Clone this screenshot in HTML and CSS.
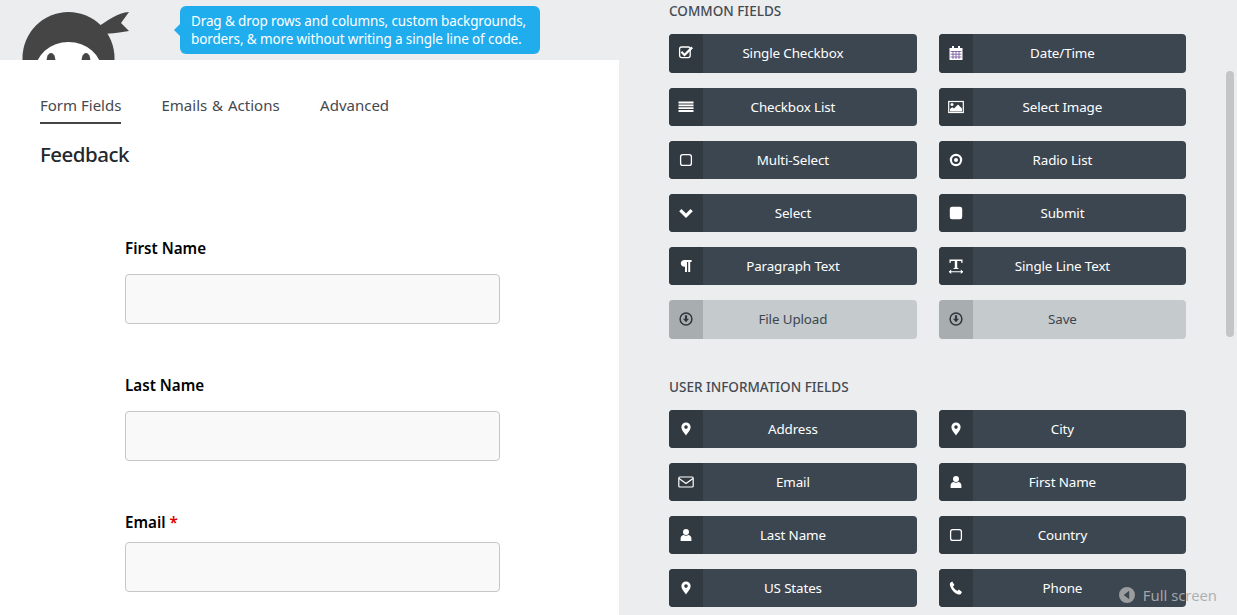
FILE: index.html
```html
<!DOCTYPE html>
<html lang="en">
<head>
<meta charset="utf-8">
<title>Form Builder</title>
<link rel="stylesheet" href="styles.css">
</head>
<body>
<svg class="sprite" aria-hidden="true">
  <symbol id="i-check" viewBox="0 1 16 16"><rect x="1.6" y="3" width="10.6" height="10.6" rx="2" fill="none" stroke="currentColor" stroke-width="1.3"/><path d="M4.2 7l2.3 2.4L13.4 2.6l1.6 1.6-8.5 8.2-3.9-3.9z" fill="currentColor"/></symbol>
  <symbol id="i-calendar" viewBox="0 0 16 16"><path d="M1.5 3h13v12h-13z" fill="currentColor"/><path d="M4 1h2v3H4zM10 1h2v3h-2z" fill="currentColor"/><path d="M2.500 6.500h11M2.500 9.200h11M2.500 12h11M5 6v8M8 6v8M11 6v8" stroke="#5b3a8c" stroke-width=".7"/></symbol>
  <symbol id="i-list" viewBox="0 0 16 16"><path d="M.5 2.500h15v2h-15zM.5 5.500h15v1.800h-15zM.5 8.300h15v1.800h-15zM.5 11.100h15v2h-15z" fill="currentColor"/></symbol>
  <symbol id="i-image" viewBox="0 0 16 16"><rect x=".7" y="2.500" width="14.600" height="11" fill="none" stroke="currentColor" stroke-width="1.200"/><circle cx="4" cy="5.600" r="1.500" fill="currentColor"/><path d="M2 12.500V10l2.300-1.800 1.700 1.200 4-4 4 4v3.100z" fill="currentColor"/></symbol>
  <symbol id="i-square" viewBox="0 0 16 16"><rect x="2.600" y="2.600" width="10.800" height="10.800" rx="2.200" fill="none" stroke="currentColor" stroke-width="1.300"/></symbol>
  <symbol id="i-radio" viewBox="0 0 16 16"><circle cx="8" cy="8" r="5.100" fill="none" stroke="currentColor" stroke-width="2.200"/><circle cx="8" cy="8" r="2" fill="currentColor"/></symbol>
  <symbol id="i-chevron" viewBox="0 0 16 16"><path d="M1.200 6.200l2.300-2.300L8 8.400l4.500-4.500 2.300 2.300L8 13z" fill="currentColor"/></symbol>
  <symbol id="i-solid" viewBox="0 0 16 16"><rect x="1.800" y="1.800" width="12.400" height="12.400" rx="2.200" fill="currentColor"/></symbol>
  <symbol id="i-para" viewBox="0 0 16 16"><path d="M6.600 2h7v1.900h-1.400V14h-2V3.900H9V14H7V8.700h-.4C4.300 8.700 2.800 7.300 2.800 5.300S4.300 2 6.600 2z" fill="currentColor"/></symbol>
  <symbol id="i-text" viewBox="0 0 16 16"><path d="M1.500 1.500h13v3.600h-1l-.5-2H9.200v6.700l1.300.4v.8h-5v-.8l1.300-.4V3.100H3l-.5 2h-1z" fill="currentColor"/><path d="M1 13.300h14v.9H1z" fill="currentColor"/><path d="M3.200 11.600v4.300L.8 13.750zM12.800 11.600v4.300l2.400-2.150z" fill="currentColor"/></symbol>
  <symbol id="i-down" viewBox="0 0 16 16"><circle cx="8" cy="8" r="5.900" fill="none" stroke="currentColor" stroke-width="1.500"/><path d="M6.900 4.300h2.200v3.500h2L8 11.300 4.900 7.800h2z" fill="currentColor"/></symbol>
  <symbol id="i-pin" viewBox="0 0 16 16"><path fill-rule="evenodd" d="M8 1.500a4.600 4.600 0 0 1 4.600 4.600c0 3-3 6.200-4.600 8.400-1.600-2.200-4.600-5.400-4.600-8.400A4.600 4.600 0 0 1 8 1.500zm0 2.800a1.800 1.800 0 1 0 0 3.600 1.800 1.800 0 0 0 0-3.600z" fill="currentColor"/></symbol>
  <symbol id="i-mail" viewBox="0 0 16 16"><rect x=".8" y="3" width="14.400" height="10" rx="1" fill="none" stroke="currentColor" stroke-width="1.200"/><path d="M1 4.500l7 5 7-5" fill="none" stroke="currentColor" stroke-width="1.200"/></symbol>
  <symbol id="i-user" viewBox="0 0 16 16"><circle cx="8" cy="4.900" r="3" fill="currentColor"/><path d="M2.600 14v-2.600c0-2 1.600-3.400 3.200-3.400.6.500 1.300.8 2.200.8s1.600-.3 2.200-.8c1.600 0 3.200 1.400 3.200 3.400V14z" fill="currentColor"/></symbol>
  <symbol id="i-phone" viewBox="0 0 16 16"><path d="M2.300 2.700L4.300 1.500 6.400 5 5 6.400c.8 1.800 2.300 3.400 4.400 4.500l1.400-1.300 3.200 2.300-1.200 2c-.5.700-1.300.8-2.200.6C6.400 13.200 3 9.700 1.900 5c-.2-.9-.1-1.700.4-2.300z" fill="currentColor"/></symbol>
  <symbol id="i-back" viewBox="0 0 16 16"><path fill-rule="evenodd" d="M8 0a8 8 0 1 1 0 16A8 8 0 0 1 8 0zm2.200 3.800L4.700 8l5.500 4.200z" fill="currentColor"/></symbol>
</svg>

<div class="app">
  <main class="editor">
    <header class="brand">
      <svg class="logo" viewBox="0 0 140 60" aria-hidden="true">
        <circle cx="68.500" cy="58" r="46" fill="#444544"/>
        <path d="M96 28 C106 22 118 12 129 12 L121 23 L129 31 C118 33 108 34 100 34 z" fill="#444544"/>
        <ellipse cx="68.500" cy="72" rx="33.500" ry="30" fill="#fff"/>
        <ellipse cx="51" cy="61" rx="4.500" ry="8" fill="#444544"/>
        <ellipse cx="86" cy="61" rx="4.500" ry="8" fill="#444544"/>
      </svg>
      <p class="tip">Drag &amp; drop rows and columns, custom backgrounds, borders, &amp; more without writing a single line of code.</p>
    </header>
    <section class="panel">
      <nav class="tabs">
        <a class="tab active">Form Fields</a>
        <a class="tab">Emails &amp; Actions</a>
        <a class="tab">Advanced</a>
      </nav>
      <h1 class="form-title">Feedback</h1>
      <form class="form">
        <div class="field">
          <label class="label">First Name</label>
          <div class="input"></div>
        </div>
        <div class="field">
          <label class="label">Last Name</label>
          <div class="input"></div>
        </div>
        <div class="field field-req">
          <label class="label">Email <span class="req">*</span></label>
          <div class="input"></div>
        </div>
      </form>
    </section>
  </main>

  <aside class="library">
    <h2 class="group-title">COMMON FIELDS</h2>
    <div class="grid">
      <div class="btn"><span class="ico"><svg><use href="#i-check"/></svg></span><span class="txt">Single Checkbox</span></div>
      <div class="btn"><span class="ico"><svg><use href="#i-calendar"/></svg></span><span class="txt">Date/Time</span></div>
      <div class="btn"><span class="ico"><svg><use href="#i-list"/></svg></span><span class="txt">Checkbox List</span></div>
      <div class="btn"><span class="ico"><svg><use href="#i-image"/></svg></span><span class="txt">Select Image</span></div>
      <div class="btn"><span class="ico"><svg><use href="#i-square"/></svg></span><span class="txt">Multi-Select</span></div>
      <div class="btn"><span class="ico"><svg><use href="#i-radio"/></svg></span><span class="txt">Radio List</span></div>
      <div class="btn"><span class="ico"><svg><use href="#i-chevron"/></svg></span><span class="txt">Select</span></div>
      <div class="btn"><span class="ico"><svg><use href="#i-solid"/></svg></span><span class="txt">Submit</span></div>
      <div class="btn"><span class="ico"><svg><use href="#i-para"/></svg></span><span class="txt">Paragraph Text</span></div>
      <div class="btn"><span class="ico"><svg><use href="#i-text"/></svg></span><span class="txt">Single Line Text</span></div>
      <div class="btn off"><span class="ico"><svg><use href="#i-down"/></svg></span><span class="txt">File Upload</span></div>
      <div class="btn off"><span class="ico"><svg><use href="#i-down"/></svg></span><span class="txt">Save</span></div>
    </div>
    <h2 class="group-title second">USER INFORMATION FIELDS</h2>
    <div class="grid">
      <div class="btn"><span class="ico"><svg><use href="#i-pin"/></svg></span><span class="txt">Address</span></div>
      <div class="btn"><span class="ico"><svg><use href="#i-pin"/></svg></span><span class="txt">City</span></div>
      <div class="btn"><span class="ico"><svg><use href="#i-mail"/></svg></span><span class="txt">Email</span></div>
      <div class="btn"><span class="ico"><svg><use href="#i-user"/></svg></span><span class="txt">First Name</span></div>
      <div class="btn"><span class="ico"><svg><use href="#i-user"/></svg></span><span class="txt">Last Name</span></div>
      <div class="btn"><span class="ico"><svg><use href="#i-square"/></svg></span><span class="txt">Country</span></div>
      <div class="btn"><span class="ico"><svg><use href="#i-pin"/></svg></span><span class="txt">US States</span></div>
      <div class="btn"><span class="ico"><svg><use href="#i-phone"/></svg></span><span class="txt">Phone</span></div>
    </div>
    <div class="scroll-thumb"></div>
    <div class="fullscreen"><svg><use href="#i-back"/></svg><span>Full screen</span></div>
  </aside>
</div>
</body>
</html>
```

FILE: styles.css
```css
* { box-sizing: border-box; }
html, body { margin: 0; height: 100%; overflow: hidden; }
body {
  background: #ecedef;
  font-family: "Noto Sans", "Open Sans", "Liberation Sans", sans-serif;
  color: #3c4650;
}
.sprite { display: none; }

.app { display: flex; height: 615px; }

.editor { width: 619px; flex: none; display: flex; flex-direction: column; }
.brand { height: 60px; flex: none; display: flex; overflow: hidden; }
.logo { width: 140px; height: 60px; flex: none; }
.tip {
  position: relative;
  margin: 6px 0 0 40px;
  width: 360px;
  height: 48px;
  padding: 6px 8px 0 11px;
  background: #1faded;
  color: #fff;
  border-radius: 6px;
  font-size: 13.500px;
  letter-spacing: -.12px;
  line-height: 18px;
}
.tip::before {
  content: "";
  position: absolute;
  left: -6px;
  top: 18px;
  border: 6px solid transparent;
  border-left: 0;
  border-right-color: #1faded;
}

.panel { flex: 1; background: #fff; padding: 30px 0 0 40px; }
.tabs { display: flex; gap: 40.500px; }
.tab {
  display: block;
  height: 34px;
  font-size: 15px;
  word-spacing: 1px;
  line-height: 30px;
  color: #45494e;
  white-space: nowrap;
}
.tab.active { width: 81px; word-spacing: 0; border-bottom: 2px solid #444; }
.form-title {
  margin: 16px 0 0;
  font-size: 20.500px;
  letter-spacing: -.5px;
  line-height: 28px;
  font-weight: 500;
  color: #23282d;
}
.form { margin: 68px 0 0 85px; width: 375px; }
.field { margin-bottom: 49px; }
.label {
  display: block;
  height: 38px;
  padding-top: 1px;
  font-size: 15.200px;
  line-height: 22px;
  font-weight: 600;
  color: #000;
}
.field-req .label { height: 32px; }
.req { color: #d00; }
.input {
  height: 50px;
  background: #f9f9f9;
  border: 1px solid #c6c6c6;
  border-radius: 4px;
}

.library { position: relative; flex: 1; padding-left: 50px; }
.group-title {
  margin: 0;
  padding: 0 0 12.400px;
  font-size: 13.500px;
  line-height: 22px;
  font-weight: 500;
  color: #444b52;
}
.group-title.second { padding: 37.100px 0 11.900px; }
.grid {
  display: grid;
  grid-template-columns: 247.800px 247.200px;
  column-gap: 22px;
  row-gap: 15px;
}
.btn {
  display: flex;
  height: 38.200px;
  background: #3c4650;
  color: #fff;
  border-radius: 4px;
  overflow: hidden;
}
.ico {
  width: 34px;
  flex: none;
  display: flex;
  align-items: center;
  justify-content: center;
  background: #323a41;
}
.ico svg { width: 16px; height: 16px; display: block; }
.txt {
  flex: 1;
  padding-right: 34px;
  text-align: center;
  font-size: 13.400px;
  letter-spacing: -.12px;
  line-height: 38.500px;
  white-space: nowrap;
}
.btn.off { background: #c5cacc; color: #3c4650; }
.btn.off .ico { background: #a8adb0; color: #2f363d; }

.scroll-thumb {
  position: absolute;
  left: 607px;
  top: 71px;
  width: 8px;
  height: 266px;
  background: #c4c6c6;
  border-radius: 4px;
}
.fullscreen {
  position: absolute;
  right: 20px;
  top: 585px;
  display: flex;
  align-items: center;
  gap: 8px;
  font-size: 14.800px;
  line-height: 20px;
  color: rgba(170, 172, 174, .95);
}
.fullscreen svg { width: 16px; height: 16px; color: #9a9c9e; }
```
